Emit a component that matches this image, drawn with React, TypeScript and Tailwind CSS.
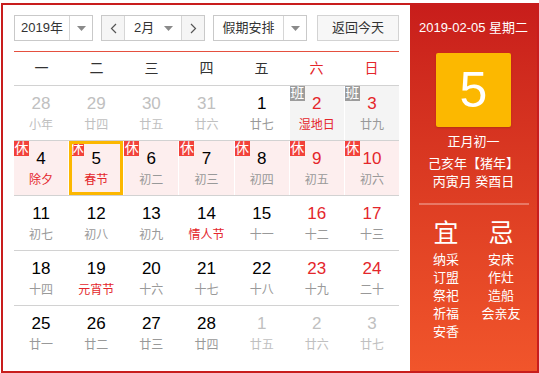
import React from 'react';

type Day = {
  n: number;
  lunar: string;
  other?: boolean;
  weekend?: boolean;
  fest?: boolean;
  tag?: 'rest' | 'work';
  selected?: boolean;
};

const weeks: Day[][] = [
  [
    { n: 28, lunar: '小年', other: true },
    { n: 29, lunar: '廿四', other: true },
    { n: 30, lunar: '廿五', other: true },
    { n: 31, lunar: '廿六', other: true },
    { n: 1, lunar: '廿七' },
    { n: 2, lunar: '湿地日', weekend: true, fest: true, tag: 'work' },
    { n: 3, lunar: '廿九', weekend: true, tag: 'work' },
  ],
  [
    { n: 4, lunar: '除夕', fest: true, tag: 'rest' },
    { n: 5, lunar: '春节', fest: true, tag: 'rest', selected: true },
    { n: 6, lunar: '初二', tag: 'rest' },
    { n: 7, lunar: '初三', tag: 'rest' },
    { n: 8, lunar: '初四', tag: 'rest' },
    { n: 9, lunar: '初五', weekend: true, tag: 'rest' },
    { n: 10, lunar: '初六', weekend: true, tag: 'rest' },
  ],
  [
    { n: 11, lunar: '初七' },
    { n: 12, lunar: '初八' },
    { n: 13, lunar: '初九' },
    { n: 14, lunar: '情人节', fest: true },
    { n: 15, lunar: '十一' },
    { n: 16, lunar: '十二', weekend: true },
    { n: 17, lunar: '十三', weekend: true },
  ],
  [
    { n: 18, lunar: '十四' },
    { n: 19, lunar: '元宵节', fest: true },
    { n: 20, lunar: '十六' },
    { n: 21, lunar: '十七' },
    { n: 22, lunar: '十八' },
    { n: 23, lunar: '十九', weekend: true },
    { n: 24, lunar: '二十', weekend: true },
  ],
  [
    { n: 25, lunar: '廿一' },
    { n: 26, lunar: '廿二' },
    { n: 27, lunar: '廿三' },
    { n: 28, lunar: '廿四' },
    { n: 1, lunar: '廿五', other: true },
    { n: 2, lunar: '廿六', other: true },
    { n: 3, lunar: '廿七', other: true },
  ],
];

const weekdays = ['一', '二', '三', '四', '五', '六', '日'];
const yi = ['纳采', '订盟', '祭祀', '祈福', '安香'];
const ji = ['安床', '作灶', '造船', '会亲友'];

const Caret = () => (
  <svg width="9" height="5" viewBox="0 0 9 5">
    <path d="M0 0h9L4.5 5z" fill="#8a8a8a" />
  </svg>
);

const Chevron = ({ dir }: { dir: 'l' | 'r' }) => (
  <svg width="7" height="11" viewBox="0 0 7 11">
    <path
      d={dir === 'l' ? 'M6 1L1.5 5.5 6 10' : 'M1 1l4.5 4.5L1 10'}
      fill="none"
      stroke="#555"
      strokeWidth="1.2"
    />
  </svg>
);

const DayCell = ({ d }: { d: Day }) => {
  const bg = d.tag === 'rest' ? 'bg-[#fdeeee]' : d.tag === 'work' ? 'bg-[#f4f4f4]' : '';
  const numColor = d.other ? 'text-[#c0c0c0]' : d.weekend ? 'text-[#e4262b]' : 'text-black';
  const lunarColor = d.other ? 'text-[#c0c0c0]' : d.fest ? 'text-[#e4262b]' : 'text-[#999]';
  return (
    <div className={`relative flex h-[54px] flex-col items-center pt-[8px] ${bg}`}>
      {d.tag && (
        <span
          className={`absolute left-0 top-0 h-[15px] w-[15px] text-center text-[14px] leading-[15px] text-white ${
            d.tag === 'rest' ? 'bg-[#f2423a]' : 'bg-[#9c9c9c]'
          }`}
        >
          {d.tag === 'rest' ? '休' : '班'}
        </span>
      )}
      {d.selected && <div className="absolute inset-0 border-[3px] border-[#fcb700]" />}
      <span className={`text-[17px] leading-[20px] ${numColor}`}>{d.n}</span>
      <span className={`mt-[3px] text-[12px] leading-[16px] ${lunarColor}`}>{d.lunar}</span>
    </div>
  );
};

export default function App() {
  return (
    <div
      className="ml-[1px] mt-[3px] flex h-[370px] w-[538px] border-2 border-[#c81d1d] bg-white text-[#333]"
      style={{ fontFamily: '"Liberation Sans", "Noto Sans CJK SC", sans-serif' }}
    >
      {/* left: calendar */}
      <div className="flex w-[407px] flex-col px-[11px] pt-[10px]">
        {/* controls */}
        <div className="flex h-[26px] items-stretch text-[13px]">
          <div className="flex w-[79px] border border-[#c9c9c9]">
            <div className="flex w-[54px] items-center justify-center">2019年</div>
            <div className="flex flex-1 items-center justify-center border-l border-[#d6d6d6]">
              <Caret />
            </div>
          </div>
          <div className="ml-[8px] flex w-[104px] border border-[#c9c9c9]">
            <div className="flex w-[22px] items-center justify-center bg-[#f5f5f5]">
              <Chevron dir="l" />
            </div>
            <div className="flex flex-1 items-center justify-between border-x border-[#d6d6d6] pl-[9px] pr-[8px]">
              <span>2月</span>
              <Caret />
            </div>
            <div className="flex w-[22px] items-center justify-center bg-[#f5f5f5]">
              <Chevron dir="r" />
            </div>
          </div>
          <div className="ml-[8px] flex w-[94px] border border-[#c9c9c9]">
            <div className="flex w-[69px] items-center justify-center">假期安排</div>
            <div className="flex flex-1 items-center justify-center border-l border-[#d6d6d6]">
              <Caret />
            </div>
          </div>
          <div className="ml-[10px] flex w-[82px] items-center justify-center border border-[#d3d3d3] bg-[#f7f7f7]">
            返回今天
          </div>
        </div>

        {/* weekday header */}
        <div className="mt-[10px] grid h-[34px] grid-cols-7 border-t border-[#e5503f] text-[14px]">
          {weekdays.map((w, i) => (
            <div
              key={w}
              className={`flex items-center justify-center ${i > 4 ? 'text-[#e4262b]' : 'text-[#333]'}`}
            >
              {w}
            </div>
          ))}
        </div>

        {/* days */}
        {weeks.map((row, ri) => (
          <div key={ri} className="grid grid-cols-7 gap-x-px border-t border-[#d2d2d2]">
            {row.map((d, i) => (
              <DayCell key={i} d={d} />
            ))}
          </div>
        ))}
      </div>

      {/* right: detail panel */}
      <div className="flex flex-1 flex-col items-center bg-gradient-to-b from-[#c81d1b] to-[#f1552b] pt-[14px] text-white">
        <div className="text-[13px] leading-[18px]">2019-02-05 星期二</div>
        <div className="mt-[16px] flex h-[74px] w-[75px] items-center justify-center rounded-[2px] bg-[#fcb800] text-[50px] leading-none shadow-[0_1px_2px_rgba(120,40,0,0.35)]">
          5
        </div>
        <div className="mt-[6px] text-[13px] leading-[18px]">正月初一</div>
        <div className="mt-[4px] text-[13px] leading-[18px]">己亥年【猪年】</div>
        <div className="text-[13px] leading-[18px]">丙寅月 癸酉日</div>
        <div className="mt-[12px] h-[2px] w-[110px] bg-white/30" />
        <div className="mt-[14px] flex w-[110px] justify-between text-[13px] leading-[18px]">
          <div className="flex w-[55px] flex-col items-center">
            <div className="mb-[4px] text-[25px] leading-[28px]">宜</div>
            {yi.map((t) => (
              <div key={t}>{t}</div>
            ))}
          </div>
          <div className="flex w-[55px] flex-col items-center">
            <div className="mb-[4px] text-[25px] leading-[28px]">忌</div>
            {ji.map((t) => (
              <div key={t}>{t}</div>
            ))}
          </div>
        </div>
      </div>
    </div>
  );
}
